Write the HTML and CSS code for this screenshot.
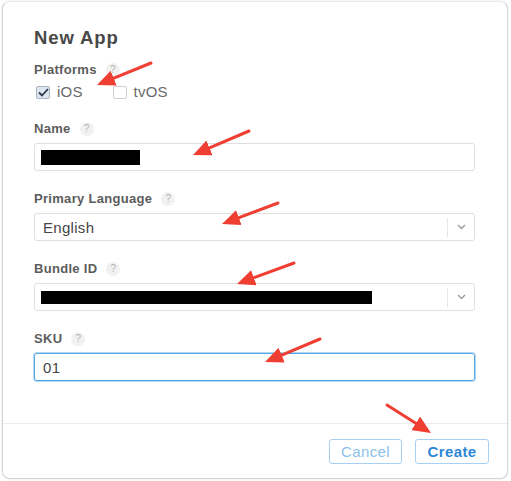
FILE: index.html
```html
<!DOCTYPE html>
<html>
<head>
<meta charset="utf-8">
<link rel="stylesheet" href="styles.css">
</head>
<body>
<div class="dialog">
  <div class="body">
    <h1 class="title">New App</h1>
    <div class="label platforms">Platforms <span class="help">?</span></div>
    <div class="checks">
      <span class="check checked"><svg width="11" height="9" viewBox="0 0 11 9"><path d="M1 4.5 L4 7.5 L10 1" fill="none" stroke="#2b3a4a" stroke-width="1.8"/></svg></span>
      <span class="check-text">iOS</span>
      <span class="check second"></span>
      <span class="check-text">tvOS</span>
    </div>

    <div class="field">
      <div class="label">Name <span class="help">?</span></div>
      <div class="input"><span class="redact name-redact"></span></div>
    </div>

    <div class="field">
      <div class="label">Primary Language <span class="help">?</span></div>
      <div class="input select">
        <span class="value">English</span>
        <span class="divider"></span>
        <span class="caret"><svg width="9" height="6" viewBox="0 0 9 6"><path d="M1 1 L4.5 4.5 L8 1" fill="none" stroke="#999" stroke-width="1.3"/></svg></span>
      </div>
    </div>

    <div class="field">
      <div class="label">Bundle ID <span class="help">?</span></div>
      <div class="input select">
        <span class="value"><span class="redact bundle-redact"></span></span>
        <span class="divider"></span>
        <span class="caret"><svg width="9" height="6" viewBox="0 0 9 6"><path d="M1 1 L4.5 4.5 L8 1" fill="none" stroke="#999" stroke-width="1.3"/></svg></span>
      </div>
    </div>

    <div class="field">
      <div class="label">SKU <span class="help">?</span></div>
      <div class="input focused"><span class="value">01</span></div>
    </div>
  </div>
  <div class="footer">
    <button class="btn cancel">Cancel</button>
    <button class="btn create">Create</button>
  </div>
</div>

<svg class="arrows" width="511" height="481" viewBox="0 0 511 481">
  <defs>
    <marker id="head" viewBox="0 0 18 16" refX="7" refY="8" markerWidth="18" markerHeight="16" markerUnits="userSpaceOnUse" orient="auto">
      <path d="M0 0 L18 8 L0 16 Z" fill="#ef3f32"/>
    </marker>
  </defs>
  <g stroke="#ef3f32" stroke-width="3" stroke-linecap="round" marker-end="url(#head)">
    <line x1="151" y1="63" x2="107.2" y2="80.8"/>
    <line x1="249" y1="131" x2="203.1" y2="150.7"/>
    <line x1="278" y1="203" x2="232.3" y2="220.1"/>
    <line x1="294" y1="263" x2="247.3" y2="280.2"/>
    <line x1="320" y1="339" x2="275.2" y2="357.8"/>
    <line x1="387" y1="405" x2="421.7" y2="427.1"/>
  </g>
</svg>
</body>
</html>
```

FILE: styles.css
```css
html, body {
  margin: 0;
  padding: 0;
  background: #ffffff;
}

body {
  font-family: "Liberation Sans", Arial, sans-serif;
  width: 511px;
  height: 481px;
  position: relative;
  overflow: hidden;
}

.dialog {
  box-sizing: border-box;
  margin: 1px 0 0 2px;
  width: 506px;
  height: 478px;
  border: 1px solid #d4d4d4;
  border-top-color: #ececec;
  border-radius: 8px;
  box-shadow: 0 0 2px rgba(0, 0, 0, 0.12);
  display: flex;
  flex-direction: column;
  background: #fff;
}

.body {
  flex: 1;
  padding: 26px 32px 0 31px;
}

.title {
  margin: 0;
  font-size: 18.5px;
  line-height: 20px;
  font-weight: bold;
  color: #484848;
  letter-spacing: 0.9px;
}

.label {
  font-size: 13px;
  line-height: 16px;
  font-weight: bold;
  color: #5c5c5c;
  letter-spacing: 0.3px;
  display: flex;
  align-items: center;
}

.platforms {
  margin-top: 14px;
}

.help {
  display: inline-block;
  width: 14px;
  height: 14px;
  border-radius: 50%;
  background: #f1f1f1;
  color: #b3b3b3;
  font-size: 10px;
  font-weight: normal;
  line-height: 14px;
  text-align: center;
  margin-left: 9px;
  letter-spacing: 0;
}

.checks {
  margin-top: 5px;
  height: 18px;
  display: flex;
  align-items: center;
  font-size: 15px;
  line-height: 18px;
  color: #6a6a6a;
}

.check {
  box-sizing: border-box;
  width: 14px;
  height: 13px;
  border: 1px solid #c4c9cf;
  border-radius: 2px;
  margin-left: 2px;
  display: flex;
  align-items: center;
  justify-content: center;
}

.check.checked {
  background: #dde5ee;
  border-color: #a9b4c0;
}

.check.second {
  margin-left: 30px;
  border-color: #cfcfcf;
}

.check-text {
  margin-left: 7px;
  letter-spacing: 0.2px;
}

.field {
  margin-top: 20px;
}

.field .label {
  margin-bottom: 6px;
}

.input {
  box-sizing: border-box;
  height: 28px;
  border: 1px solid #e0e0e0;
  border-radius: 3px;
  display: flex;
  align-items: center;
  padding-left: 6px;
  font-size: 15px;
  color: #454545;
  letter-spacing: 0.3px;
}

.input .value {
  flex: 1;
  padding-left: 2px;
  display: flex;
  align-items: center;
}

.redact {
  display: inline-block;
  background: #000;
}

.name-redact {
  width: 99px;
  height: 15px;
}

.bundle-redact {
  width: 331px;
  height: 13px;
  margin-left: -2px;
}

.divider {
  width: 1px;
  height: 19px;
  background: #e6e6e6;
}

.caret {
  width: 26px;
  display: flex;
  justify-content: center;
  align-items: center;
}

.focused {
  border-color: #55a7e6;
  box-shadow: 0 0 0 1px rgba(85, 167, 230, 0.45);
}

.footer {
  box-sizing: border-box;
  height: 55px;
  border-top: 1px solid #ececec;
  display: flex;
  justify-content: flex-end;
  align-items: flex-start;
  padding: 15px 18px 0 0;
  gap: 13px;
}

.btn {
  box-sizing: border-box;
  height: 25px;
  padding: 0;
  border: 1px solid #a9d0f0;
  border-radius: 3px;
  background: #fff;
  font-family: "Liberation Sans", Arial, sans-serif;
  font-size: 15px;
  letter-spacing: 0.4px;
}

.cancel {
  width: 73px;
  color: #8dbfe9;
}

.create {
  width: 74px;
  color: #2e88d6;
  font-weight: bold;
}

.arrows {
  position: absolute;
  left: 0;
  top: 0;
  pointer-events: none;
}
```
